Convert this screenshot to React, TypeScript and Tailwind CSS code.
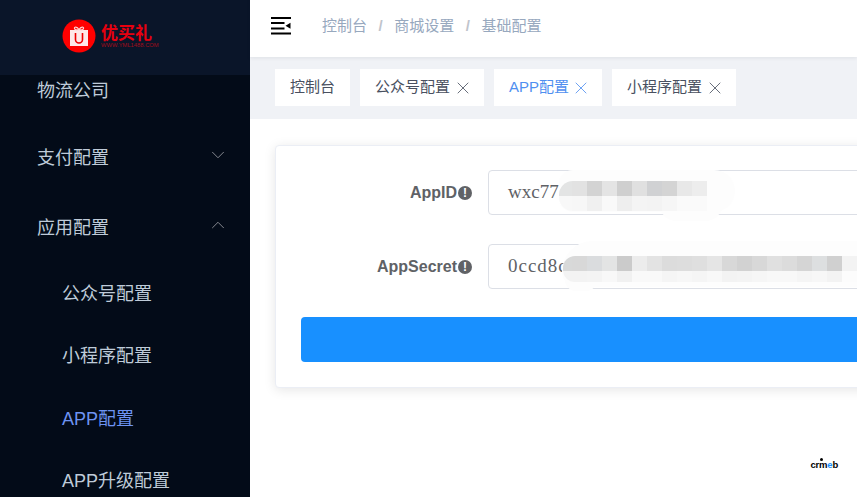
import React from "react";
import { ChevronDown, ChevronUp, X } from "lucide-react";

const cjk = "font-['Liberation_Sans','Noto_Sans_CJK_SC',sans-serif]";

const appIdBlocks = [
  ["#e3e4e4", "#f8f8f8"], ["#e2e2e2", "#f7f7f7"], ["#d3d3d3", "#f0f0f0"], ["#e4e4e4", "#f9f9f9"],
  ["#cfcfcf", "#eeeeee"], ["#e0e0e0", "#f4f4f4"], ["#d0d1d3", "#f3f3f3"], ["#d4d4d4", "#f6f6f6"],
  ["#e8e8e8", "#fafafa"], ["#ededed", "#fafafa"],
];

const secretBlocks = [
  ["#d8d9d9", "#f3f3f3"], ["#d8d8d8", "#f3f3f3"], ["#dadcde", "#f4f4f4"], ["#e3e4e4", "#f8f8f8"],
  ["#cbcbcb", "#f1f1f1"], ["#ececec", "#f9f9f9"], ["#e3e3e3", "#f9f9f9"], ["#dcdcdc", "#f5f5f5"],
  ["#dddddd", "#f7f7f7"], ["#dfdfdf", "#f5f5f5"], ["#e5e5e5", "#f8f8f8"], ["#d8d8d8", "#f3f3f3"],
  ["#d2d2d2", "#f4f4f4"], ["#d8d8d8", "#f6f6f6"], ["#e0e0e0", "#f8f8f8"], ["#dcdcdc", "#f8f8f8"],
  ["#d5d5d5", "#f5f5f5"], ["#dddfe0", "#f7f7f7"], ["#d0d0d0", "#f3f3f3"], ["#f3f3f3", "#fcfcfc"],
];

const Logo = () => (
  <div className="flex items-center gap-[5px] mb-[4px]">
    <svg width="34" height="34" viewBox="0 0 34 34">
      <circle cx="17" cy="17" r="16.5" fill="#f00" />
      <rect x="8" y="11" width="18" height="16" fill="#ffe9e9" />
      <path d="M13.5 14v6.500a3.500 3.500 0 0 0 7 0V14" fill="none" stroke="#e00" strokeWidth="1.6" />
      <path d="M17 10.500c-2-3-5-3-4.500-1s3 1.500 4.500 1c1.500.5 4 1 4.500-1s-2.500-2-4.500 1z" fill="none" stroke="#ffd0d0" strokeWidth="1.200" />
    </svg>
    <div className="flex flex-col">
      <span className="text-[17px] leading-[17px] font-bold text-[#e8000f] font-['Noto_Sans_CJK_SC',sans-serif]">优买礼</span>
      <span className="mt-[2px] text-[5.800px] leading-[7px] text-[#a00d1c] font-['Liberation_Sans',sans-serif] whitespace-nowrap">WWW.YML1488.COM</span>
    </div>
  </div>
);

const MenuIcon = () => (
  <svg width="20" height="18" viewBox="0 0 20 18" className="shrink-0">
    <path d="M0 1h20M0 6h13.500M0 11.500h13.500M0 16.500h20" stroke="#000" strokeWidth="1.800" fill="none" />
    <path d="M14.500 8.700l5-3v6z" fill="#000" />
  </svg>
);

const SubItem = ({ label, active }: { label: string; active?: boolean }) => (
  <div className={`h-[62.500px] pl-[62px] flex items-center text-[18px] ${active ? "text-[#6d93f2]" : "text-[#bfcbd9]"}`}>{label}</div>
);

const Sidebar = () => (
  <aside className="w-[250px] shrink-0 h-full bg-[#030b18] flex flex-col overflow-hidden">
    <div className="h-[75px] shrink-0 bg-[#0a1529] flex items-center pl-[62px]">
      <Logo />
    </div>
    <div className={`${cjk} flex flex-col`}>
      <div className="h-[30px] mt-[1px] pl-[37px] flex items-center text-[18px] text-[#bfcbd9]">物流公司</div>
      <div className="h-[70px] mt-[17px] pl-[37px] pr-[21px] flex items-center justify-between text-[18px] text-[#bfcbd9]">
        支付配置
        <ChevronDown size={22} strokeWidth={1} className="text-[#909399] -mt-[6px]" />
      </div>
      <div className="h-[70px] pl-[37px] pr-[21px] flex items-center justify-between text-[18px] text-[#bfcbd9]">
        应用配置
        <ChevronUp size={22} strokeWidth={1} className="text-[#909399] -mt-[6px]" />
      </div>
      <div className="flex flex-col">
        <SubItem label="公众号配置" />
        <SubItem label="小程序配置" />
        <SubItem label="APP配置" active />
        <SubItem label="APP升级配置" />
      </div>
    </div>
  </aside>
);

const Tag = ({ label, active, closable }: { label: string; active?: boolean; closable?: boolean }) => (
  <div className={`h-[37px] bg-white pl-[15px] pr-[15px] flex items-center text-[15px] whitespace-nowrap ${active ? "gap-[5px] text-[#4f8ff0]" : "gap-[6px] text-[#495060]"}`}>
    {label}
    {closable && <X size={20} strokeWidth={1} className="-mx-[3.500px]" />}
  </div>
);

const Mosaic = ({ blocks, lowerClass, clipClass }: { blocks: string[][]; lowerClass: string; clipClass: string }) => (
  <div className={`flex ${clipClass}`}>
    {blocks.map((b, i) => (
      <div key={i} className="w-[15px] shrink-0 flex flex-col">
        <div className="h-[15px]" style={{ background: b[0] }} />
        <div className={lowerClass} style={{ background: b[1] }} />
      </div>
    ))}
  </div>
);

const Field = ({ label, value, valueClass, children }: { label: string; value: string; valueClass?: string; children: React.ReactNode }) => (
  <div className="flex items-center h-[45px]">
    <div className="w-[187px] shrink-0 flex items-center justify-end gap-[1px] pr-[16px] text-base font-bold text-[#606266] font-['Liberation_Sans',sans-serif]">
      {label}
      <span className="w-[14px] h-[14px] rounded-full bg-[#606266] text-white text-[12px] leading-[14px] text-center font-bold">!</span>
    </div>
    <div className="relative w-[540px] shrink-0 h-[45px] border border-[#dcdfe6] rounded bg-white flex items-center pl-[19px] text-[19px] text-[#606266] font-['Liberation_Serif',serif]">
      <span className={valueClass}>{value}</span>
      {children}
    </div>
  </div>
);

const CrmebMark = () => (
  <div className="relative mt-auto flex justify-end pr-[19px] pb-[27px] font-['Liberation_Sans',sans-serif]">
    <span className="text-[9.500px] leading-[10px] font-bold text-black tracking-[-0.2px]">
      crm<span className="text-[#1890ff]">e</span>b
    </span>
    <span className="absolute right-[34px] bottom-[36px] w-[3px] h-[3px] rounded-full bg-black" />
  </div>
);

export default function App() {
  return (
    <div className={`${cjk} w-[857px] h-[497px] flex overflow-hidden bg-white`}>
      <Sidebar />
      <main className="flex-1 min-w-0 flex flex-col">
        <header className="h-[57px] shrink-0 flex items-center pl-[21px] pb-[5px] shadow-[0_1px_4px_rgba(0,21,41,0.08)] relative">
          <MenuIcon />
          <nav className="ml-[31px] flex items-center text-[15px] text-[#97a8be]">
            <span>控制台</span>
            <span className="mx-[11.500px] text-[#c0c4cc] font-bold">/</span>
            <span>商城设置</span>
            <span className="mx-[11.500px] text-[#c0c4cc] font-bold">/</span>
            <span>基础配置</span>
          </nav>
        </header>
        <div className="h-[62px] shrink-0 bg-[#f0f2f6] pl-[25px] pb-[1px] flex items-center gap-[10px]">
          <Tag label="控制台" />
          <Tag label="公众号配置" closable />
          <Tag label="APP配置" active closable />
          <Tag label="小程序配置" closable />
        </div>
        <div className="flex-1 pl-[25px] pt-[26px] overflow-hidden flex flex-col">
          <div className="w-[800px] h-[243px] shrink-0 bg-white border border-[#ebeef5] rounded shadow-[0_2px_12px_rgba(0,0,0,0.1)] pl-[25px] pt-[24px] flex flex-col gap-[29px]">
            <Field label="AppID" value="wxc77">
              <div className="absolute left-[70px] top-[-1px] w-[176px] h-[42px] rounded-l-[20px] rounded-r-[30px] bg-[#fdfdfd]" />
              <div className="absolute left-[171px] top-[34px] w-[62px] h-[16px] rounded-b-full bg-[#fdfdfd]" />
              <div className="absolute left-[70px] top-[10px] rounded-l-[14px] overflow-hidden">
                <Mosaic blocks={appIdBlocks} lowerClass="h-[15px]" clipClass="-ml-[2px]" />
              </div>
            </Field>
            <Field label="AppSecret" value="0ccd8c" valueClass="tracking-[1px]">
              <div className="absolute left-[73px] top-[-4px] w-[470px] h-[46px] rounded-tl-[40px] rounded-bl-[20px] bg-[#fdfdfd]" />
              <div className="absolute left-[76px] top-[35px] w-[32px] h-[11px] rounded-b-full bg-[#fdfdfd]" />
              <div className="absolute left-[74px] top-[11px] rounded-l-[12px] overflow-hidden">
                <Mosaic blocks={secretBlocks} lowerClass="h-[11px]" clipClass="-ml-[6px]" />
              </div>
            </Field>
            <div className="w-[700px] h-[45px] bg-[#1890ff] rounded -mt-[1px]" />
          </div>
          <CrmebMark />
        </div>
      </main>
    </div>
  );
}
